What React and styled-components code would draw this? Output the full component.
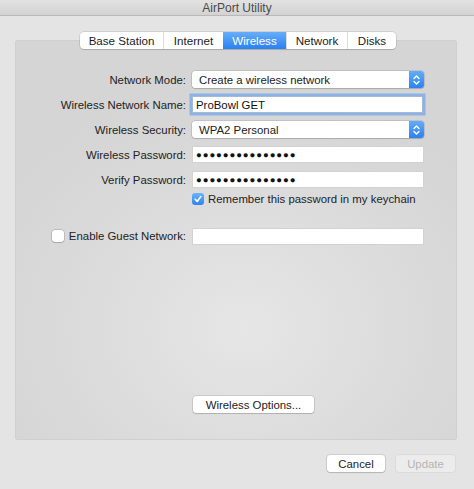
import React from 'react';
import styled, { createGlobalStyle } from 'styled-components';

const GlobalStyle = createGlobalStyle`
  html, body {
    margin: 0;
    padding: 0;
  }
  body {
    font-family: "Liberation Sans", Arial, sans-serif;
    font-size: 11.4px;
    color: #262626;
    background: #e3e3e3;
  }
`;

const Window = styled.div`
  width: 474px;
  height: 489px;
  display: flex;
  flex-direction: column;
  background: #e4e4e4;
  overflow: hidden;
`;

const TitleBar = styled.div`
  height: 15px;
  flex: none;
  background: linear-gradient(#e2e2e2, #d3d3d3);
  border-bottom: 1px solid #b9b9b9;
  display: flex;
  align-items: center;
  justify-content: center;
  font-size: 12px;
  color: #4a4a4a;
  line-height: 14px;
`;

const Body = styled.div`
  flex: 1;
  display: flex;
  flex-direction: column;
  padding: 16px 17px 0 15px;
`;

const TabBar = styled.div`
  align-self: flex-start;
  margin-left: 65px;
  margin-bottom: -9px;
  position: relative;
  z-index: 1;
  display: flex;
  height: 17px;
  background: #fff;
  border-radius: 4px;
  box-shadow: 0 0 0 0.5px rgba(0, 0, 0, 0.18), 0 1px 1px rgba(0, 0, 0, 0.12);
`;

const Tab = styled.div`
  width: ${p => p.$w}px;
  display: flex;
  align-items: center;
  justify-content: center;
  font-size: 11.6px;
  color: ${p => (p.$active ? '#fff' : '#1c1c1c')};
  background: ${p => (p.$active ? 'linear-gradient(#66aefa, #2b80f2)' : 'transparent')};
  border-left: ${p => (p.$first || p.$active ? 'none' : '1px solid #dcdcdc')};
  &:first-child { border-radius: 4px 0 0 4px; }
  &:last-child { border-radius: 0 4px 4px 0; }
`;

const Panel = styled.div`
  height: 400px;
  box-sizing: border-box;
  background: radial-gradient(ellipse 280px 240px at 52% 72%, #e6e6e6 0%, #dadada 65%, #d5d5d5 100%);
  border: 1px solid #d0d0d0;
  border-radius: 2px;
  display: flex;
  flex-direction: column;
  padding-top: 26px;
`;

// five 25px field rows, the keychain checkbox, a gap, then the guest row
const Form = styled.div`
  display: grid;
  grid-template-columns: 170px 232px;
  grid-template-rows: repeat(5, 25px) 14px 18px 24px;
  column-gap: 6px;
  align-items: center;
`;

const Label = styled.div`
  display: flex;
  align-items: center;
  justify-content: flex-end;
  gap: 5px;
  color: #222;
  white-space: nowrap;
`;

const Popup = styled.div`
  height: 17px;
  display: flex;
  align-items: center;
  background: #fff;
  border-radius: 3px;
  box-shadow: 0 0 0 0.5px rgba(0, 0, 0, 0.2), 0 1px 1px rgba(0, 0, 0, 0.12);
  padding-left: 7px;
  color: #222;
`;

const PopupText = styled.span`
  flex: 1;
`;

const Stepper = styled.div`
  width: 15px;
  height: 17px;
  border-radius: 0 3px 3px 0;
  background: linear-gradient(#62acf9, #2d82f2);
  display: flex;
  align-items: center;
  justify-content: center;
`;

const Field = styled.div`
  height: 17px;
  box-sizing: border-box;
  background: #fff;
  border: 1px solid ${p => (p.$focus ? '#a3b9d6' : '#d2d2d2')};
  box-shadow: ${p => (p.$focus ? '0 0 0 2.5px #8db3e6' : 'none')};
  display: flex;
  align-items: center;
  padding-left: 3px;
  color: #111;
  margin-right: ${p => (p.$focus ? 1 : 0)}px;
`;

const Dots = styled.span`
  font-size: 9.6px;
  letter-spacing: 0.9px;
  line-height: 12px;
  color: #111;
`;

const CheckRow = styled.div`
  grid-column: 2;
  display: flex;
  align-items: center;
  gap: 4px;
  color: #222;
  white-space: nowrap;
`;

const Box = styled.div`
  width: 12px;
  height: 12px;
  flex: none;
  box-sizing: border-box;
  border-radius: 3px;
  background: ${p => (p.$checked ? 'linear-gradient(#6cb3fa, #2f83f2)' : '#fff')};
  box-shadow: ${p => (p.$checked ? 'none' : '0 0 0 0.5px rgba(0,0,0,0.25), 0 1px 1px rgba(0,0,0,0.1)')};
  display: flex;
  align-items: center;
  justify-content: center;
`;

const Gap = styled.div`
  grid-column: 1 / -1;
`;

const Spacer = styled.div`
  flex: 1;
`;

const OptionsRow = styled.div`
  display: grid;
  grid-template-columns: 170px auto;
  column-gap: 7px;
  margin-bottom: 26px;
`;

const Button = styled.div`
  grid-column: ${p => p.$col || 'auto'};
  justify-self: start;
  height: 17px;
  width: ${p => p.$w}px;
  box-sizing: border-box;
  display: flex;
  align-items: center;
  justify-content: center;
  background: ${p => (p.$disabled ? '#ececec' : '#fff')};
  color: ${p => (p.$disabled ? '#b4b4b4' : '#222')};
  border-radius: 3px;
  box-shadow: ${p => (p.$disabled
    ? '0 0 0 0.5px rgba(0,0,0,0.08)'
    : '0 0 0 0.5px rgba(0,0,0,0.2), 0 1px 1px rgba(0,0,0,0.12)')};
`;

const Footer = styled.div`
  display: flex;
  justify-content: flex-end;
  gap: 11px;
  padding: 15px 2px 0 0;
`;

const Chevrons = () => (
  <svg width="9" height="12" viewBox="0 0 9 12">
    <path d="M2 4.5 L4.5 2 L7 4.5 M2 7.5 L4.5 10 L7 7.5" fill="none" stroke="#fff" strokeWidth="1.4" strokeLinecap="round" strokeLinejoin="round" />
  </svg>
);

const Check = () => (
  <svg width="10" height="10" viewBox="0 0 10 10">
    <path d="M2.2 5.2 L4.2 7.4 L7.8 2.6" fill="none" stroke="#fff" strokeWidth="1.6" strokeLinecap="round" strokeLinejoin="round" />
  </svg>
);

const tabs = [
  { name: 'Base Station', w: 83 },
  { name: 'Internet', w: 59 },
  { name: 'Wireless', w: 63, active: true },
  { name: 'Network', w: 60 },
  { name: 'Disks', w: 48 },
];

const App = () => {
  const dots = '●'.repeat(15);
  return (
    <>
      <GlobalStyle />
      <Window>
        <TitleBar>AirPort Utility</TitleBar>
        <Body>
          <TabBar>
            {tabs.map((t, i) => (
              <Tab key={t.name} $w={t.w} $active={t.active} $first={i === 0}>{t.name}</Tab>
            ))}
          </TabBar>
          <Panel>
            <Form>
              <Label>Network Mode:</Label>
              <Popup>
                <PopupText>Create a wireless network</PopupText>
                <Stepper><Chevrons /></Stepper>
              </Popup>

              <Label>Wireless Network Name:</Label>
              <Field $focus>ProBowl GET</Field>

              <Label>Wireless Security:</Label>
              <Popup>
                <PopupText>WPA2 Personal</PopupText>
                <Stepper><Chevrons /></Stepper>
              </Popup>

              <Label>Wireless Password:</Label>
              <Field><Dots>{dots}</Dots></Field>

              <Label>Verify Password:</Label>
              <Field><Dots>{dots}</Dots></Field>

              <CheckRow>
                <Box $checked><Check /></Box>
                Remember this password in my keychain
              </CheckRow>

              <Gap />

              <Label>
                <Box />
                Enable Guest Network:
              </Label>
              <Field />
            </Form>
            <Spacer />
            <OptionsRow>
              <Button $col={2} $w={121}>Wireless Options...</Button>
            </OptionsRow>
          </Panel>
          <Footer>
            <Button $w={58}>Cancel</Button>
            <Button $w={59} $disabled>Update</Button>
          </Footer>
        </Body>
      </Window>
    </>
  );
};

export default App;
